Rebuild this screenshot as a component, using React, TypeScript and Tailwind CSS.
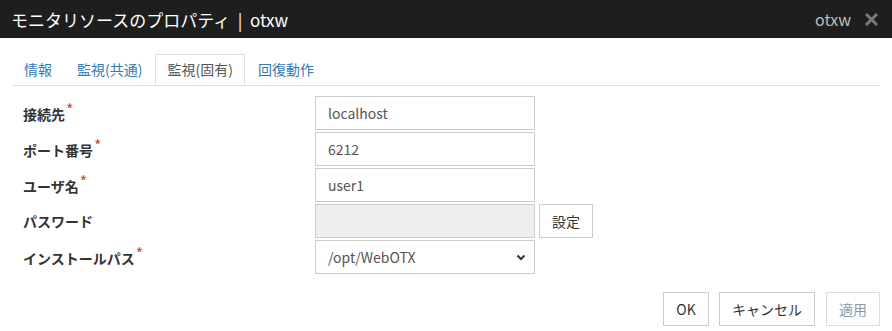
import React from "react";

const font = {
  fontFamily: '"Noto Sans CJK JP", "Noto Sans", "Liberation Sans", sans-serif',
};

type Row = {
  label: string;
  required?: boolean;
  kind: "text" | "password" | "select";
  value?: string;
};

const rows: Row[] = [
  { label: "接続先", required: true, kind: "text", value: "localhost" },
  { label: "ポート番号", required: true, kind: "text", value: "6212" },
  { label: "ユーザ名", required: true, kind: "text", value: "user1" },
  { label: "パスワード", kind: "password" },
  { label: "インストールパス", required: true, kind: "select", value: "/opt/WebOTX" },
];

const tabs = ["情報", "監視(共通)", "監視(固有)", "回復動作"];

function CloseIcon() {
  return (
    <svg width="13" height="13" viewBox="0 0 13 13">
      <path d="M2 2 L11 11 M11 2 L2 11" stroke="#7a7a7a" strokeWidth="3" strokeLinecap="square" />
    </svg>
  );
}

function Chevron() {
  return (
    <svg width="10" height="7" viewBox="0 0 10 7">
      <path d="M1.5 1.5 L5 5 L8.5 1.5" stroke="#333" strokeWidth="2" fill="none" />
    </svg>
  );
}

export default function App() {
  return (
    <div className="w-[892px] h-[331px] bg-white text-[#333] overflow-hidden" style={font}>
      {/* header */}
      <div className="h-[38px] bg-[#1e1e1e] flex items-center justify-between pl-[11px] pr-[14px]">
        <div className="text-[17px] text-white leading-none whitespace-pre">モニタリソースのプロパティ  |  otxw</div>
        <div className="flex items-center gap-[14px]">
          <span className="text-[16px] text-[#bdbdbd] leading-none">otxw</span>
          <CloseIcon />
        </div>
      </div>

      <div className="px-3">
        {/* tabs */}
        <div className="mt-[16px] flex gap-[1px] border-b border-[#ddd]">
          {tabs.map((t, i) =>
            i === 2 ? (
              <div
                key={t}
                className="h-[31px] px-[11px] flex items-center text-[14px] text-[#555] bg-white border border-[#ddd] border-b-white -mb-[1px] rounded-t-[2px]"
              >
                {t}
              </div>
            ) : (
              <div key={t} className="h-[31px] px-[12px] flex items-center text-[14px] text-[#337ab7]">
                {t}
              </div>
            )
          )}
        </div>

        {/* form */}
        <div className="mt-[10px] flex flex-col gap-[2px]">
          {rows.map((r) => (
            <div key={r.label} className="flex items-center h-[34px]">
              <div className="w-[303px] pl-[11px] text-[14px] font-bold text-[#333] leading-none">
                {r.label}
                {r.required && (
                  <span className="text-[#e2412a] font-normal text-[16px] relative -top-[4px] ml-[1px]">*</span>
                )}
              </div>
              {r.kind === "text" && (
                <div className="w-[220px] h-[34px] border border-[#ccc] px-3 flex items-center text-[14px] text-[#555]">
                  {r.value}
                </div>
              )}
              {r.kind === "password" && (
                <div className="flex items-center gap-[4px]">
                  <div className="w-[220px] h-[34px] border border-[#ccc] bg-[#eeeeee]" />
                  <button className="w-[54px] h-[34px] border border-[#ccc] bg-white text-[14px] text-[#333]">
                    設定
                  </button>
                </div>
              )}
              {r.kind === "select" && (
                <div className="w-[220px] h-[34px] border border-[#ccc] pl-3 pr-[8px] flex items-center justify-between text-[14px] text-[#555]">
                  <span>{r.value}</span>
                  <Chevron />
                </div>
              )}
            </div>
          ))}
        </div>

        {/* footer */}
        <div className="mt-[18px] flex justify-end gap-[10px]">
          <button className="w-[46px] h-[34px] border border-[#ccc] bg-white text-[14px] text-[#333]">OK</button>
          <button className="w-[96px] h-[34px] border border-[#ccc] bg-white text-[14px] text-[#333]">キャンセル</button>
          <button className="w-[54px] h-[34px] border border-[#ddd] bg-white text-[14px] text-[#8d9aa8] ml-[1px]">
            適用
          </button>
        </div>
      </div>
    </div>
  );
}
